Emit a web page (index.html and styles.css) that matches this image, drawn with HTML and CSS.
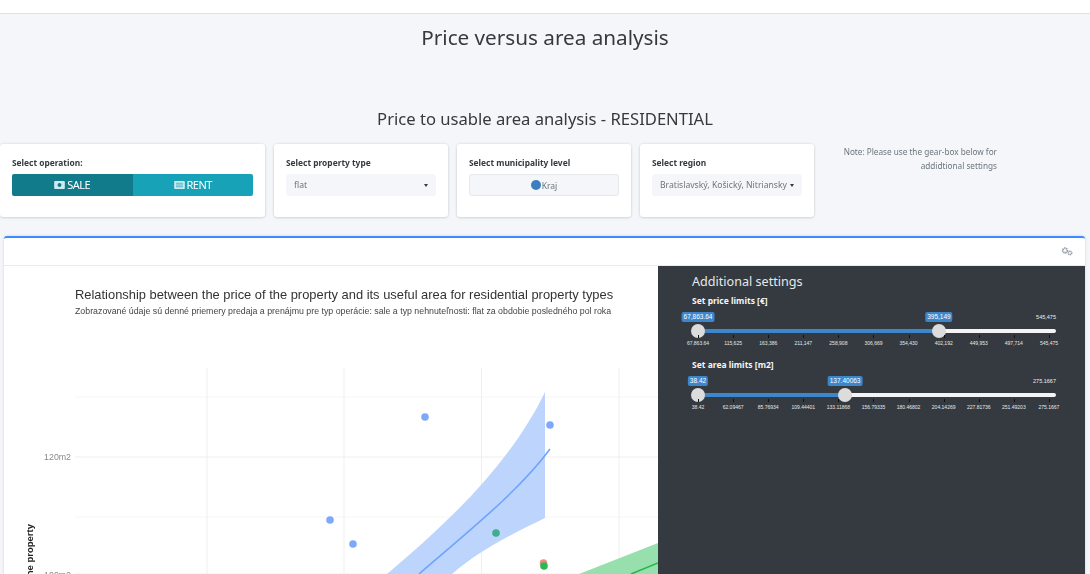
FILE: index.html
```html
<!DOCTYPE html>
<html lang="en">
<head>
    <meta charset="UTF-8">
    <title>Price versus area analysis</title>
    <link rel="stylesheet" href="styles.css">
</head>
<body>
    <div class="page">
        <div class="topbar"></div>
        <h2 class="page-title">Price versus area analysis</h2>
        <h3 class="section-title">Price to usable area analysis - RESIDENTIAL</h3>

        <div class="filters">
            <div class="card card-wide">
                <label class="card-label">Select operation:</label>
                <div class="toggle">
                    <div class="toggle-btn active">
                        <svg class="toggle-icon" viewBox="0 0 12 9"><rect width="12" height="9" rx="1" fill="#cfe9ee"/><circle cx="6" cy="4.500" r="2.200" fill="#117a8b"/></svg>
                        SALE
                    </div>
                    <div class="toggle-btn">
                        <svg class="toggle-icon" viewBox="0 0 12 9"><rect width="12" height="9" rx="1" fill="#cfe9ee"/><path d="M2 2.500h8M2 4.500h8M2 6.500h8" stroke="#17a2b8" stroke-width="0.800"/></svg>
                        RENT
                    </div>
                </div>
            </div>
            <div class="card">
                <label class="card-label">Select property type</label>
                <div class="select"><span>flat</span><i class="caret"></i></div>
            </div>
            <div class="card">
                <label class="card-label">Select municipality level</label>
                <div class="radio"><i class="radio-dot"></i><span>Kraj</span></div>
            </div>
            <div class="card">
                <label class="card-label">Select region</label>
                <div class="select"><span>Bratislavský, Košický, Nitriansky</span><i class="caret"></i></div>
            </div>
            <p class="note">Note: Please use the gear-box below for addidtional settings</p>
        </div>

        <div class="box">
            <div class="box-header">
                <svg class="gears" viewBox="0 0 12 9">
                    <circle cx="4" cy="3.500" r="2.300" fill="none" stroke="#8f959b" stroke-width="1.800" stroke-dasharray="1.200 0.600"/>
                    <circle cx="9" cy="6" r="1.700" fill="none" stroke="#8f959b" stroke-width="1.500" stroke-dasharray="1 0.500"/>
                </svg>
            </div>
            <div class="box-body">
                <svg class="plot" width="654" height="308" viewBox="4 266 654 308">
                    <g class="grid-minor">
                        <path d="M75 397H658M75 517H658"/>
                    </g>
                    <g class="grid-major">
                        <path d="M207 368V574M344 368V574M481.500 368V574M619 368V574M75 457H658M75 574H658"/>
                    </g>

                    <text class="plot-title" x="75" y="299">Relationship between the price of the property and its useful area for residential property types</text>
                    <text class="plot-subtitle" x="75" y="314">Zobrazované údaje sú denné priemery predaja a prenájmu pre typ operácie: sale a typ nehnuteľnosti: flat za obdobie posledného pol roka</text>
                    <text class="axis-tick" x="71" y="460">120m2</text>
                    <text class="axis-tick" x="71" y="578">100m2</text>
                    <text class="axis-title" transform="translate(33 524) rotate(-90)">the property</text>

                    <path class="ribbon-blue" d="M387 574C445 525 510 465 545 392V518C510 535 480 550 452 574Z"/>
                    <path class="line-blue" d="M419 574C470 530 520 490 550 449"/>
                    <path class="ribbon-green" d="M579 574L658 543V574Z"/>
                    <path class="line-green" d="M631 574L658 563"/>

                    <circle class="pt-blue" cx="425" cy="417" r="3.800"/>
                    <circle class="pt-blue" cx="550" cy="425" r="3.800"/>
                    <circle class="pt-blue" cx="330" cy="520" r="3.800"/>
                    <circle class="pt-blue" cx="353" cy="544" r="3.800"/>
                    <circle class="pt-teal" cx="496" cy="533" r="3.800"/>
                    <circle class="pt-red" cx="543.500" cy="563" r="3.800"/>
                    <circle class="pt-green" cx="544" cy="566" r="3.800"/>
                </svg>

                <div class="settings">
                    <h4 class="settings-title">Additional settings</h4>

                    <label class="slider-label">Set price limits [€]</label>
                    <div class="slider">
                        <span class="slider-max">545,475</span>
                        <span class="slider-value" style="left: 0%">67,863.64</span>
                        <span class="slider-value" style="left: 67.3%">395,149</span>
                        <div class="track"><div class="track-fill" style="width: 67.3%"></div></div>
                        <i class="handle" style="left: 0%"></i>
                        <i class="handle" style="left: 67.3%"></i>
                    </div>
                    <div class="ticks">
                        <span>67,863.64</span><span>115,625</span><span>163,386</span><span>211,147</span><span>258,908</span><span>306,669</span><span>354,430</span><span>402,192</span><span>449,953</span><span>497,714</span><span>545,475</span>
                    </div>

                    <label class="slider-label">Set area limits [m2]</label>
                    <div class="slider">
                        <span class="slider-max">275.1667</span>
                        <span class="slider-value" style="left: 0%">38.42</span>
                        <span class="slider-value" style="left: 41.1%">137.40063</span>
                        <div class="track"><div class="track-fill" style="width: 41.1%"></div></div>
                        <i class="handle" style="left: 0%"></i>
                        <i class="handle" style="left: 41.1%"></i>
                    </div>
                    <div class="ticks">
                        <span>38.42</span><span>62.09467</span><span>85.76934</span><span>109.44401</span><span>133.11868</span><span>156.79335</span><span>180.46802</span><span>204.14269</span><span>227.81736</span><span>251.49203</span><span>275.1667</span>
                    </div>
                </div>
            </div>
        </div>
    </div>
</body>
</html>
```

FILE: styles.css
```css
html, body {
    margin: 0;
    height: 100%;
    overflow: hidden;
    background-color: #f4f6f9;
}
.page {
    font-family: 'Noto Sans', sans-serif;
    color: #343a40;
    height: 574px;
    overflow: hidden;
    filter: blur(0.65px);
}
.topbar {
    height: 13px;
    background-color: #fff;
    border-bottom: 1px solid #dee2e6;
}
.page-title {
    margin: 7px 0 0;
    height: 32px;
    line-height: 32px;
    font-size: 20.700px;
    font-weight: 400;
    text-align: center;
}
.section-title {
    margin: 53px 0 0;
    height: 26px;
    line-height: 26px;
    font-size: 16.600px;
    font-weight: 400;
    text-align: center;
}

/* filter cards */
.filters {
    display: flex;
    gap: 9px;
    margin-top: 12px;
    height: 73px;
}
.card {
    width: 174px;
    box-sizing: border-box;
    padding: 12px 12px 0;
    background-color: #fff;
    border-radius: 3px;
    box-shadow: 0 0 3px rgba(0, 0, 0, .12), 0 1px 3px rgba(0, 0, 0, .1);
}
.card-wide {
    width: 265px;
}
.card-label {
    display: block;
    height: 18px;
    line-height: 14px;
    font-size: 8.400px;
    font-weight: 700;
}
.toggle {
    display: flex;
    height: 22px;
    border-radius: 2px;
    overflow: hidden;
}
.toggle-btn {
    flex: 1;
    display: flex;
    align-items: center;
    justify-content: center;
    gap: 2px;
    box-sizing: border-box;
    padding-bottom: 1px;
    background-color: #17a2b8;
    color: #fff;
    font-size: 11px;
    letter-spacing: -0.5px;
}
.toggle-btn.active {
    background-color: #117a8b;
}
.toggle-icon {
    width: 11px;
    height: 8px;
}
.select {
    display: flex;
    align-items: center;
    justify-content: space-between;
    height: 22px;
    padding: 0 8px;
    background-color: #f4f6f9;
    border-radius: 3px;
    font-size: 8.600px;
    color: #6c757d;
}
.caret {
    width: 0;
    height: 0;
    border-left: 2.500px solid transparent;
    border-right: 2.500px solid transparent;
    border-top: 3px solid #343a40;
}
.radio {
    display: flex;
    align-items: center;
    justify-content: center;
    gap: 1px;
    height: 20px;
    background-color: #f4f6f9;
    border: 1px solid #e6e8ec;
    border-radius: 3px;
    font-size: 8.500px;
    color: #6c757d;
}
.radio-dot {
    width: 10px;
    height: 10px;
    border-radius: 50%;
    background-color: #3c7fc0;
}
.note {
    width: 164px;
    margin: 0 0 0 10px;
    padding-top: 1px;
    font-size: 8.200px;
    line-height: 14px;
    color: #6c757d;
    text-align: right;
}

/* main box */
.box {
    margin: 19px 5px 0 4px;
    height: 400px;
    background-color: #fff;
    border-top: 2px solid #3c8dff;
    border-radius: 3px 3px 0 0;
    box-shadow: 0 0 3px rgba(0, 0, 0, .15);
}
.box-header {
    display: flex;
    align-items: center;
    justify-content: flex-end;
    box-sizing: border-box;
    height: 28px;
    padding-right: 12px;
    border-bottom: 1px solid #e9ecef;
}
.gears {
    width: 12px;
    height: 9px;
}
.box-body {
    position: relative;
    height: 371px;
}
.plot {
    display: block;
}
.plot-title {
    font-family: 'Liberation Sans', sans-serif;
    font-size: 12.900px;
    fill: #333;
}
.plot-subtitle {
    font-family: 'Liberation Sans', sans-serif;
    font-size: 8.800px;
    fill: #444;
}
.axis-tick {
    font-family: 'Liberation Sans', sans-serif;
    font-size: 8.800px;
    fill: #8a8a8a;
    text-anchor: end;
}
.axis-title {
    font-family: 'Liberation Sans', sans-serif;
    font-size: 9.500px;
    font-weight: 700;
    fill: #222;
    text-anchor: end;
}
.grid-minor path {
    stroke: #f6f6f6;
    fill: none;
}
.grid-major path {
    stroke: #efefef;
    fill: none;
}
.ribbon-blue { fill: #bdd5fc; }
.line-blue { fill: none; stroke: #6ea4fb; stroke-width: 1.600; }
.ribbon-green { fill: #97e0ad; }
.line-green { fill: none; stroke: #22b84f; stroke-width: 1.600; }
.pt-blue { fill: #7ea9fb; }
.pt-teal { fill: #3fae8f; }
.pt-red { fill: #f08a80; }
.pt-green { fill: #2bb955; }

/* gear-box panel */
.settings {
    position: absolute;
    top: 0;
    right: 0;
    width: 427px;
    height: 100%;
    box-sizing: border-box;
    padding: 5px 29px 0 34px;
    background-color: #343a40;
    color: #fff;
}
.settings-title {
    margin: 0;
    height: 22px;
    line-height: 21px;
    font-size: 12.600px;
    font-weight: 400;
    color: #e6e8ea;
}
.slider-label {
    display: block;
    height: 15px;
    line-height: 15px;
    font-size: 8.500px;
    font-weight: 700;
    color: #f4f6f9;
}
.slider {
    position: relative;
    height: 25px;
    margin: 0 0 0 6px;
}
.track {
    position: absolute;
    left: 0;
    right: 0;
    bottom: 0;
    height: 4px;
    background-color: #f4f4f4;
    border-radius: 2px;
}
.track-fill {
    height: 100%;
    background-color: #3c86cc;
}
.handle {
    position: absolute;
    bottom: -5px;
    width: 14px;
    height: 14px;
    margin-left: -7px;
    border-radius: 50%;
    background-color: #dcdcdc;
}
.slider-value {
    position: absolute;
    top: 4px;
    transform: translateX(-50%);
    padding: 1px 2px;
    background-color: #3c86cc;
    border-radius: 2px;
    font-family: 'Liberation Sans', sans-serif;
    font-size: 6.500px;
    line-height: 8px;
    color: #fff;
    white-space: nowrap;
}
.slider-max {
    position: absolute;
    top: 5px;
    right: 0;
    font-family: 'Liberation Sans', sans-serif;
    font-size: 5.500px;
    line-height: 8px;
    color: #eee;
}
.ticks {
    display: flex;
    justify-content: space-between;
    height: 17.500px;
    margin: 6px 7px 0 6px;
    font-family: 'Liberation Sans', sans-serif;
    font-size: 5px;
    line-height: 8px;
    color: #e8e8e8;
}
.ticks span {
    position: relative;
    display: flex;
    justify-content: center;
    width: 0;
    white-space: nowrap;
}
.ticks span::before {
    content: "";
    position: absolute;
    top: -4px;
    left: 0;
    width: 1px;
    height: 3px;
    background-color: #111;
}
```
